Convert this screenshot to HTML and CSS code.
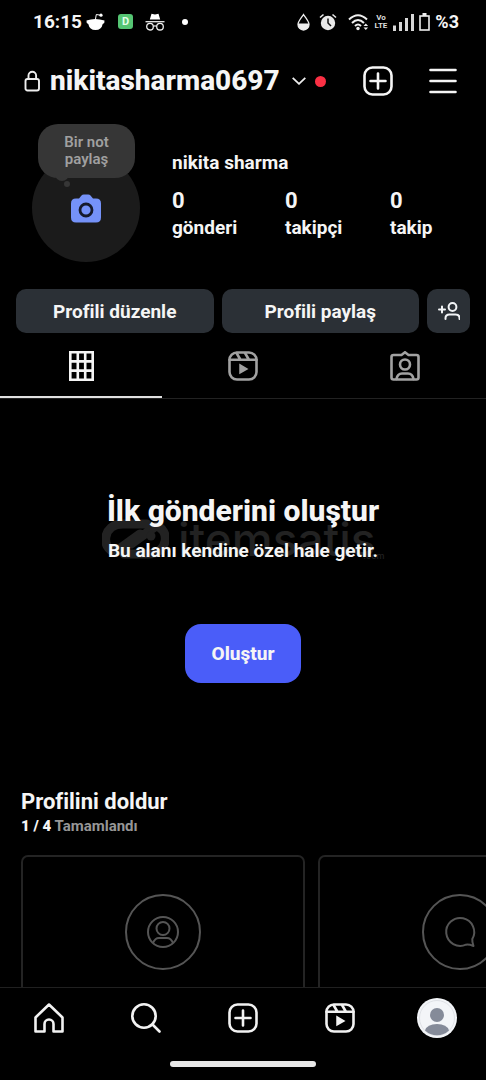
FILE: index.html
```html
<!DOCTYPE html>
<html lang="tr">
<head>
<meta charset="utf-8">
<meta name="viewport" content="width=device-width, initial-scale=1">
<title>nikitasharma0697</title>
<link rel="stylesheet" href="styles.css">
</head>
<body>
<svg width="0" height="0" class="defs" aria-hidden="true">
  <symbol id="plus-box" viewBox="0 0 30 30"><rect x="1.5" y="1.5" width="27" height="27" rx="8"/><path d="M15 7.500v15M7.500 15h15"/></symbol>
  <symbol id="reels" viewBox="0 0 30 30"><rect x="1.500" y="1.500" width="27" height="27" rx="7.500"/><path d="M1.500 8.700h27M8.500 2l3.800 6.500M17 2l3.800 6.500"/><path d="M12 13.800v8.200l7-4.100z" fill="currentColor" stroke-width="1.500"/></symbol>
</svg>
<div class="phone">
  <div class="status">
    <div class="status-group">
      <span class="clock">16:15</span>
      <svg width="19" height="18" viewBox="0 0 19 18"><path d="M.5 7.500q8.500-3 18 0 .5 2.500-1.800 3.500-1.200 6-7.200 6T2.300 11Q0 10 .5 7.500z" fill="#fff"/><path d="M9.500 6l.8-4.500 4.200.7" fill="none" stroke="#fff" stroke-width="1"/><circle cx="15" cy="2.200" r="1.600" fill="#fff"/></svg>
      <span class="app-badge">D</span>
      <svg width="20" height="18" viewBox="0 0 20 18" fill="none" stroke="#eee" stroke-width="1.300"><path d="M4.800 6.500L6.500.8l3.500.8 3.500-.8 1.700 5.700z" fill="#fff" stroke="none"/><path d="M.5 8.700h19"/><circle cx="5" cy="13.700" r="3.300"/><circle cx="15" cy="13.700" r="3.300"/><path d="M8.300 13.300q1.700-1 3.400 0"/></svg>
      <span class="status-dot"></span>
    </div>
    <div class="status-group">
      <svg width="13" height="18" viewBox="0 0 13 18"><path d="M6.500 1.500C4 5.500 1 8.500 1 11.500a5.500 5.500 0 0 0 11 0c0-3-3-6-5.500-10z" fill="none" stroke="#eee" stroke-width="1.300"/><path d="M1 10.500h11v1a5.500 5.500 0 0 1-11 0z" fill="#eee"/></svg>
      <svg class="alarm" width="18" height="18" viewBox="0 0 18 18"><circle cx="9" cy="10" r="7.200" fill="#e8e8e8"/><path d="M1 4.500L4.500 1.500M17 4.500L13.500 1.500" stroke="#e8e8e8" stroke-width="1.600"/><path d="M9 5.500V10l3 3" fill="none" stroke="#111" stroke-width="1.500"/></svg>
      <svg width="21" height="18" viewBox="0 0 21 18" fill="none" stroke="#eee" stroke-width="2"><path d="M1 6.500q9-8.500 18 0M4 10q6-6 12 0M7 13q3-3 6 0"/><circle cx="10" cy="15.500" r="1.700" fill="#eee" stroke="none"/><path d="M15.500 13l2.300-2.500 2.300 2.500zM15.500 14.500l2.300 2.500 2.300-2.500z" fill="#eee" stroke="none"/></svg>
      <span class="volte">Vo<br>LTE</span>
      <svg class="signal" width="21" height="18" viewBox="0 0 21 18" fill="#d8d8d8"><path d="M0 12.500h3V18H0zM6 9h3v9H6zM12 5h3v13h-3zM18 1h3v17h-3z"/></svg>
      <svg width="11" height="18" viewBox="0 0 11 18"><rect x="1" y="3" width="9" height="14" fill="none" stroke="#eee" stroke-width="1.600"/><path d="M3.500 0h4v3h-4z" fill="#eee"/></svg>
      <span class="battery">%3</span>
    </div>
  </div>

  <header class="header">
    <svg width="17" height="22" viewBox="0 0 17 22" fill="none" stroke="#eee" stroke-width="1.900"><rect x="1.500" y="9" width="13.500" height="11.500" rx="2"/><path d="M4.500 9V5.500a3.800 3.800 0 0 1 7.600 0V9"/></svg>
    <h1 class="username">nikitasharma0697</h1>
    <svg width="14" height="8" viewBox="0 0 14 8" fill="none" stroke="#eee" stroke-width="1.800"><path d="M.7.8L7 6.800 13.300.8"/></svg>
    <span class="notice"></span>
    <div class="header-actions">
      <button class="icon-button" aria-label="Yeni"><svg class="icon" width="30" height="30"><use href="#plus-box"/></svg></button>
      <button class="icon-button" aria-label="Menü"><svg class="icon" width="28" height="26" viewBox="0 0 28 26"><path d="M1.500 2h25M1.500 13h25M1.500 24h25"/></svg></button>
    </div>
  </header>

  <main class="content">
    <section class="profile">
      <div class="avatar">
        <svg width="30" height="29" viewBox="0 0 30 29"><path d="M5 4.500h3L10.500 1.500Q11.300.5 12.800.5h4.400q1.500 0 2.300 1L22 4.500h3q5 0 5 5V23.500q0 5-5 5H5q-5 0-5-5V9.500q0-5 5-5z" fill="#7592f8"/><circle cx="15" cy="16" r="6" fill="none" stroke="#161a2b" stroke-width="2.800"/></svg>
        <button class="note">Bir not<br>paylaş</button>
      </div>
      <div class="details">
        <h2 class="name">nikita sharma</h2>
        <div class="stats">
          <div><strong>0</strong><span>gönderi</span></div>
          <div><strong>0</strong><span>takipçi</span></div>
          <div><strong>0</strong><span>takip</span></div>
        </div>
      </div>
    </section>

    <div class="actions">
      <button class="action">Profili düzenle</button>
      <button class="action">Profili paylaş</button>
      <button class="action" aria-label="Kişileri keşfet"><svg width="22" height="18" viewBox="0 0 22 18" fill="none" stroke="#f2f4f6" stroke-width="2" stroke-linecap="round"><circle cx="14.500" cy="5" r="3.900"/><path d="M7.500 17v-1q0-3.500 4-3.500h6q4 0 4 3.500v1M1 7.500h6M4 4.500v6"/></svg></button>
    </div>

    <div class="tabs">
      <button class="tab active" aria-label="Gönderiler"><svg width="25" height="30" viewBox="0 0 25 30" fill="none" stroke="#f5f5f5" stroke-width="2.600"><path d="M1.300 1.300h22.400v27.400H1.300zM8.800 1v28M16.200 1v28M1 10.400h23M1 19.600h23"/></svg></button>
      <button class="tab" aria-label="Reels"><svg class="icon" width="30" height="30"><use href="#reels"/></svg></button>
      <button class="tab" aria-label="Etiketlenenler"><svg class="icon" width="30" height="30" viewBox="0 0 30 30"><path d="M3.500 4H11.500l3.500-2.700L18.500 4h8q2 0 2 2v20.500q0 2-2 2h-23q-2 0-2-2V6q0-2 2-2z"/><circle cx="15" cy="13.500" r="5"/><path d="M6.500 28q1-5.500 5.500-5.500h6q4.500 0 5.500 5.500"/></svg></button>
    </div>

    <section class="empty">
      <div class="watermark" aria-hidden="true">
        <svg width="67" height="40" viewBox="0 0 67 40" fill="none" stroke="#222" stroke-width="9" stroke-linecap="round"><path d="M45 5H21C0 5-1 30 13 33L38 15M22 35H46C67 35 68 10 54 7L29 25"/><circle cx="49" cy="17" r="4.500" fill="#222" stroke="none"/></svg>
        <span class="brand">itemsatis<small>.com</small></span>
      </div>
      <h2>İlk gönderini oluştur</h2>
      <p>Bu alanı kendine özel hale getir.</p>
      <button class="create">Oluştur</button>
    </section>

    <section class="complete">
      <h3>Profilini doldur</h3>
      <p><b>1 / 4</b> Tamamlandı</p>
      <div class="cards">
        <div class="card"><svg width="76" height="76" viewBox="0 0 76 76"><circle cx="38" cy="38" r="37"/><circle cx="38" cy="38" r="15"/><circle cx="38" cy="34.500" r="6.500"/><path d="M28 49q2-5 6-5h8q4 0 6 5"/></svg></div>
        <div class="card"><svg width="76" height="76" viewBox="0 0 76 76"><circle cx="38" cy="38" r="37"/><path d="M50.300 45A14 14 0 1 0 44 50.700Q47 50.300 51.500 52Q50 47.500 50.300 45z" stroke-linejoin="round"/></svg></div>
      </div>
    </section>
  </main>

  <nav class="nav">
    <a href="#" aria-label="Ana sayfa"><svg class="icon" width="30" height="30" viewBox="0 0 30 30"><path d="M1.500 28.500V14.500L15 1.500l13.500 13v14h-9V21a4.500 4.500 0 0 0-9 0v7.500z" stroke-linejoin="round"/></svg></a>
    <a href="#" aria-label="Ara"><svg class="icon" width="30" height="30" viewBox="0 0 30 30"><circle cx="13" cy="13" r="11.700"/><path d="M21.500 21.500l7 7"/></svg></a>
    <a href="#" aria-label="Oluştur"><svg class="icon" width="30" height="30"><use href="#plus-box"/></svg></a>
    <a href="#" aria-label="Reels"><svg class="icon" width="30" height="30"><use href="#reels"/></svg></a>
    <a href="#" aria-label="Profil"><svg width="40" height="40" viewBox="0 0 40 40"><circle cx="20" cy="20" r="20" fill="#f3f5f8"/><circle cx="20" cy="20" r="17.500" fill="none" stroke="#d9dce1" stroke-width=".8"/><circle cx="20" cy="17" r="7" fill="#858b99"/><path d="M8 32.500q2-6.500 12-6.500t12 6.500a17.500 17.500 0 0 1-24 0z" fill="#858b99"/></svg></a>
  </nav>
  <div class="gesture"><span></span></div>
</div>
</body>
</html>
```
FILE: styles.css
```css
* { box-sizing: border-box; }
body { margin: 0; background: #000; color: #f5f5f5; font-family: Roboto, "Liberation Sans", sans-serif; }
h1, h2, h3, p { margin: 0; }
button { border: 0; padding: 0; background: none; color: inherit; font: inherit; cursor: pointer; }
svg { display: block; flex: none; }
.defs { position: absolute; }
.icon { fill: none; stroke: currentColor; stroke-width: 2.6; stroke-linecap: round; }
.phone { display: flex; flex-direction: column; height: 100vh; }

.status { display: flex; justify-content: space-between; align-items: center; height: 43px; padding: 0 27px 0 33px; flex: none; }
.status-group { display: flex; align-items: center; }
.clock { font-size: 19px; font-weight: 700; margin-right: 4px; }
.app-badge { width: 15px; height: 15px; margin: 0 12px 0 13px; border-radius: 3px; background: #55c573; color: #e4ffe9; font-size: 11px; line-height: 15px; font-weight: 700; text-align: center; }
.status-dot { width: 6px; height: 6px; margin-left: 17px; border-radius: 50%; background: #fff; }
.alarm { margin: 0 11px 0 9px; }
.volte { margin: 0 6px 0 5px; font-size: 8px; line-height: 8px; font-weight: 700; text-align: center; color: #ddd; }
.signal { margin-right: 5px; }
.battery { margin-left: 5px; font-size: 18px; font-weight: 700; }

.header { display: flex; align-items: center; height: 76px; padding: 0 29px 0 24px; flex: none; }
.username { margin: 0 12px 0 9px; font-size: 28px; line-height: 36px; font-weight: 800; }
.notice { width: 11px; height: 11px; margin-left: 9px; border-radius: 50%; background: #fb3044; }
.header-actions { display: flex; align-items: center; gap: 36px; margin-left: auto; }

.content { flex: 1; min-height: 0; overflow: auto; scrollbar-width: none; }
.profile { display: flex; gap: 32px; padding: 5px 32px 27px; }
.avatar { position: relative; display: grid; place-items: center; width: 108px; height: 108px; margin-top: 30px; border-radius: 50%; background: #1b1b1b; flex: none; }
.note { position: absolute; left: 6px; top: -30px; width: 97px; height: 54px; border-radius: 20px; background: #363636; color: #a0a0a0; font-size: 15px; line-height: 17px; font-weight: 600; }
.note::before { content: ""; position: absolute; left: 17px; bottom: -3px; width: 14px; height: 8px; border-radius: 0 0 7px 7px; background: #363636; }
.note::after { content: ""; position: absolute; left: 26px; bottom: -9px; width: 6px; height: 6px; border-radius: 50%; background: #363636; }
.details { flex: 1; padding-top: 27px; }
.name { font-size: 19px; line-height: 24px; font-weight: 700; }
.stats { display: grid; grid-template-columns: 113px 105px 1fr; margin-top: 12px; }
.stats strong { display: block; font-size: 22px; line-height: 28px; font-weight: 700; }
.stats span { display: block; font-size: 19px; line-height: 26px; font-weight: 700; }

.actions { display: grid; grid-template-columns: 1fr 1fr 43px; gap: 8px; padding: 0 16px; }
.action { display: grid; place-items: center; height: 44px; border-radius: 10px; background: #2b3036; font-size: 19px; font-weight: 700; }

.tabs { display: grid; grid-template-columns: repeat(3, 1fr); border-bottom: 1px solid #222; }
.tab { display: grid; place-items: center; height: 65px; padding-top: 3px; color: #a2a2a2; border-bottom: 2px solid transparent; }
.tab.active { border-bottom-color: #e0e0e0; }

.empty { position: relative; display: flex; flex-direction: column; align-items: center; padding: 92px 16px 0; }
.empty h2 { position: relative; font-size: 30px; line-height: 40px; font-weight: 800; }
.empty p { position: relative; margin-top: 8px; font-size: 19px; line-height: 24px; font-weight: 700; }
.create { margin-top: 61px; height: 59px; padding: 0 27px; border-radius: 16px; background: #4a5df9; font-size: 19px; font-weight: 800; }
.watermark { position: absolute; top: 120px; left: 50%; display: flex; align-items: flex-start; gap: 9px; margin-left: -141px; color: #222; }
.brand { position: relative; font-family: Inter, sans-serif; font-size: 46px; line-height: 40px; font-weight: 500; }
.brand small { position: absolute; right: -9px; bottom: -2px; font-size: 9px; line-height: 10px; }

.complete { padding: 106px 0 0 21px; }
.complete h3 { font-size: 22px; line-height: 26px; font-weight: 700; }
.complete p { margin-top: 2px; font-size: 15px; line-height: 18px; font-weight: 700; color: #969696; }
.complete b { color: #f5f5f5; }
.cards { display: flex; gap: 13px; margin-top: 20px; overflow: hidden; }
.card { display: flex; justify-content: center; width: 284px; height: 260px; padding-top: 37px; border: 2px solid #242424; border-radius: 7px; flex: none; }
.card svg { fill: none; stroke: #555; stroke-width: 2; }

.nav { display: grid; grid-template-columns: repeat(5, 1fr); height: 61px; border-top: 1px solid #202020; flex: none; }
.nav a { display: grid; place-items: center; color: #f2f2f2; }
.gesture { display: flex; justify-content: center; padding: 13px 0; flex: none; }
.gesture span { width: 30%; height: 6px; border-radius: 3px; background: #e8e8e8; }
```
